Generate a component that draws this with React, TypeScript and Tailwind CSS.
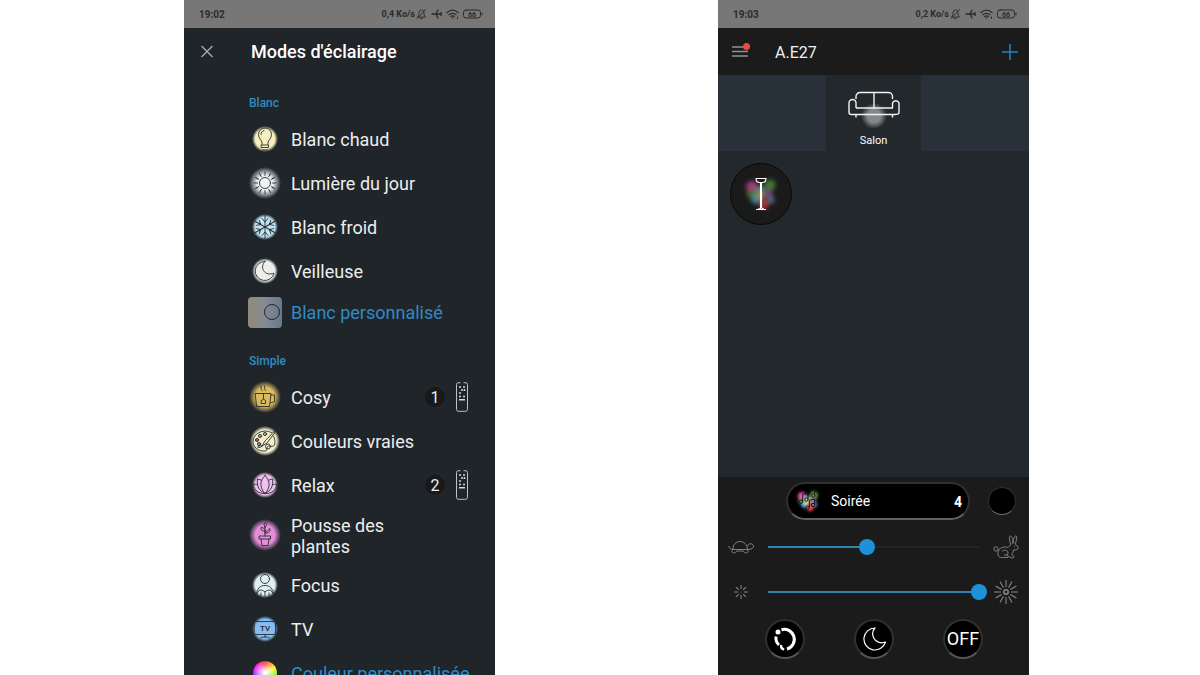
import { useState } from "react";
import type { ReactNode } from "react";

interface Mode {
  name: string;
  icon: ReactNode;
  shortcut?: number;
  custom?: boolean;
}

interface Section {
  title: string;
  modes: Mode[];
}

interface GlowIconProps {
  id: string;
  color: string;
  radius?: number;
  solid?: number;
  children: ReactNode;
}

// 34px drawing on a soft coloured disc
function GlowIcon({ id, color, radius = 13, solid = 0.75, children }: GlowIconProps) {
  return (
    <svg
      viewBox="0 0 34 34"
      className="w-[34px] h-[34px]"
      fill="none"
      stroke="#2b2f31"
      strokeWidth="0.9"
      strokeLinecap="round"
      strokeLinejoin="round"
      aria-hidden="true"
    >
      <defs>
        <radialGradient id={id}>
          <stop offset="0" stopColor={color} />
          <stop offset={solid} stopColor={color} />
          <stop offset="1" stopColor={color} stopOpacity="0" />
        </radialGradient>
      </defs>
      <circle cx="17" cy="17" r={radius} fill={`url(#${id})`} stroke="none" />
      {children}
    </svg>
  );
}

const sunRays = [0, 30, 60, 90, 120, 150, 180, 210, 240, 270, 300, 330];
const flakeArms = [0, 60, 120, 180, 240, 300];

const sections: Section[] = [
  {
    title: "Blanc",
    modes: [
      {
        name: "Blanc chaud",
        icon: (
          <GlowIcon id="warm" color="#f6eebd" radius={13}>
            <path d="M14 22.500v-2c0-2-3.500-4-3.500-8a6.500 6.500 0 0 1 13 0c0 4-3.500 6-3.500 8v2M13.500 23h7v2.500h-7zM13 12.500c0-2.200 1.200-3.500 3-4M14.500 28h5" />
          </GlowIcon>
        ),
      },
      {
        name: "Lumière du jour",
        icon: (
          <GlowIcon id="day" color="#e9eff2" radius={16} solid={0.5}>
            <circle cx="17" cy="17" r="5.500" fill="#eef5f7" />
            {sunRays.map((a) => (
              <path key={a} d="M17 9.500V6" transform={`rotate(${a} 17 17)`} />
            ))}
          </GlowIcon>
        ),
      },
      {
        name: "Blanc froid",
        icon: (
          <GlowIcon id="cold" color="#bfe4f3" radius={13}>
            {flakeArms.map((a) => (
              <path key={a} d="M17 17V5.500M14 8.500l3 3.500 3-3.500" transform={`rotate(${a} 17 17)`} />
            ))}
          </GlowIcon>
        ),
      },
      {
        name: "Veilleuse",
        icon: (
          <GlowIcon id="night" color="#eeeeeb" radius={13}>
            <path d="M17 7.500a9.500 9.500 0 1 0 9 11.500c-4 2-8.500 1-10.500-2.500-1.800-3-1-6.500 1.500-9z" />
          </GlowIcon>
        ),
      },
      {
        name: "Blanc personnalisé",
        custom: true,
        icon: (
          <span className="flex w-[34px] h-[31px] items-center justify-end rounded-sm bg-linear-to-r from-[#918a7b] via-[#868b92] to-[#68788c] pr-0.5">
            <span className="w-4 h-4 rounded-full border border-[#20272d]" />
          </span>
        ),
      },
    ],
  },
  {
    title: "Simple",
    modes: [
      {
        name: "Cosy",
        shortcut: 1,
        icon: (
          <GlowIcon id="cosy" color="#d8bb60" radius={16} solid={0.6}>
            <path d="M7.500 13.500h15.500l-1.500 13H9zM23 15h3.500v6.500l-4 1.500M15.500 13.500V19M14 10.500c-2-2 0-2.500-1-4.500M17.500 10.500c-2-2 0-2.500-1-4.500" />
            <path d="M13.500 20.500l2-1.500 2 1.500v3h-4z" />
          </GlowIcon>
        ),
      },
      {
        name: "Couleurs vraies",
        icon: (
          <GlowIcon id="palette" color="#f3efca" radius={15}>
            <path d="M23.500 8.500C15 4 5 10 5 17.500c0 6 6 10 12 9.500 3 0 1-3 2.500-4.500 2-1.500 5 1.500 7-1.500 1-3 .5-6-1-9" />
            <path d="M28 5.500L17 17l-3 5 5-3L28 7M14 22c-2-.5-3 0-4.500 1 2 1 4 .5 4.500-1z" />
            <circle cx="20" cy="22.500" r="2.500" />
            <circle cx="17" cy="10" r="1.600" fill="#8ec39a" />
            <circle cx="12" cy="12" r="1.600" fill="#d9a14e" />
            <circle cx="9" cy="16" r="1.600" fill="#cc5b4f" />
            <circle cx="11" cy="20" r="1.600" fill="#5c9dc5" />
          </GlowIcon>
        ),
      },
      {
        name: "Relax",
        shortcut: 2,
        icon: (
          <GlowIcon id="relax" color="#efc1ee" radius={13}>
            <path d="M17 7.500c-5.500 5.500-5.500 12 0 18 5.500-6 5.500-12.500 0-18zM13 12l-3.500-1c-1 7 1.500 12 7.500 14.500M21 12l3.500-1c1 7-1.500 12-7.500 14.500M9.500 16.500c-1.500 0-3-.5-4.500 0 1 5.500 6 9.500 12 9 6 .5 11-3.500 12-9-1.500-.5-3 0-4.500 0" />
          </GlowIcon>
        ),
      },
      {
        name: "Pousse des plantes",
        icon: (
          <GlowIcon id="plant" color="#e58fda" radius={16} solid={0.6}>
            <path d="M11.500 18h11v3h-11zM13 21l1 6.500h6l1-6.500M17 18V8M17 15l5-4.500c.5 3-1.500 5-5 4.500zM17 13c-3 .5-4.500-1-4-3.500 2.500 0 4 1 4 3.500zM17 9c-1.500-2-1-3.500.5-4.500 1.500 1.500 1.500 3-.5 4.500z" />
          </GlowIcon>
        ),
      },
      {
        name: "Focus",
        icon: (
          <GlowIcon id="focus" color="#e0f0f0" radius={13}>
            <circle cx="17" cy="11" r="4.500" />
            <path d="M8.500 26c.5-5.500 3.500-8.500 8.500-8.500s8 3 8.500 8.500M8.500 26l3-4c2 0 4 .5 5.500 2 1.500-1.500 3.500-2 5.500-2l3 4M17 24v4.500M13 25v3M21 25v3" />
          </GlowIcon>
        ),
      },
      {
        name: "TV",
        icon: (
          <GlowIcon id="tv" color="#85bdf0" radius={13}>
            <path d="M6.500 9.500h21v13h-21zM17 22.500V25M12.500 26c3-1.500 6-1.500 9 0" />
            <text x="17" y="19" textAnchor="middle" fontSize="8" fontWeight="500" fill="#25282a" stroke="none">
              TV
            </text>
          </GlowIcon>
        ),
      },
      {
        name: "Couleur personnalisée",
        custom: true,
        icon: (
          <span className="w-6 h-6 rounded-full bg-[radial-gradient(circle,#fff_5%,transparent_75%),conic-gradient(#f22,#fe0,#3e3,#0dd,#33f,#f0f,#f22)]" />
        ),
      },
    ],
  },
];

function StatusBar({ time, rate }: { time: string; rate: string }) {
  return (
    <div className="flex h-7 shrink-0 items-center bg-[#777777] pl-[15px] pr-3 text-[#2b2b2b]">
      <span className="flex-1 text-[10px] font-bold">{time}</span>
      <span className="pt-0.5 text-[9px] font-bold">{rate}</span>
      <svg
        viewBox="0 0 68 12"
        className="w-[68px] h-3"
        fill="none"
        stroke="currentColor"
        strokeLinecap="round"
        strokeLinejoin="round"
        aria-hidden="true"
      >
        <path d="M3 9h7.500L9 7V4.500a2.500 2.500 0 0 0-5 0V7L2.500 9M5.500 10.500h2M10.500 1.500l-8 9" strokeWidth="0.900" />
        <path d="M17 6h9.500M25 6l-3-.2-2 0M21 6l2-4M21 6l2 4M26 4.500v3" strokeWidth="1.300" />
        <path d="M32 4.500c3.500-3 7.500-3 11 0M34 6.700c2.500-2 4.500-2 7 0M35.700 8.600c1.300-1 2.300-1 3.600 0" strokeWidth="1.200" />
        <circle cx="37.500" cy="10" r="0.800" fill="currentColor" stroke="none" />
        <path d="M42.500 9v1.500" />
        <rect x="48.500" y="2" width="17" height="8" rx="2.500" />
        <path d="M67 5v2" />
        <text x="57" y="8.500" textAnchor="middle" fontSize="7" fontWeight="700" fill="currentColor" stroke="none">
          66
        </text>
      </svg>
    </div>
  );
}

function RemoteIcon() {
  return (
    <svg viewBox="0 0 12 30" className="w-3 h-[30px]" fill="none" stroke="#bfc2c4" aria-hidden="true">
      <path d="M4.500.7H2.500a2 2 0 0 0-2 2v24.600a2 2 0 0 0 2 2h7a2 2 0 0 0 2-2V2.700a2 2 0 0 0-2-2H7.500" />
      <g fill="#d5d7d8" stroke="none">
        <circle cx="4" cy="5" r="1" />
        <circle cx="8" cy="5" r="1" />
        <circle cx="6" cy="8" r="1" />
        <circle cx="8.500" cy="8" r="1" />
        <circle cx="4" cy="11" r="1" />
        <circle cx="4" cy="14.500" r="1" />
        <circle cx="8" cy="14.500" r="1" />
        <rect x="3" y="17" width="6" height="1.500" />
      </g>
    </svg>
  );
}

function ModeRow({ mode }: { mode: Mode }) {
  return (
    <button
      type="button"
      className="flex w-full min-h-11 items-center pl-16 pr-6 text-left text-lg leading-[21px] text-[#eceeef]"
    >
      <span className="flex w-[34px] shrink-0 justify-center">{mode.icon}</span>
      {mode.custom ? (
        <span className="ml-[9px] pt-px whitespace-nowrap text-[#318bc3]">{mode.name}</span>
      ) : (
        <>
          <span className="ml-[9px] flex-1 pt-px">{mode.name}</span>
          <span className="flex w-[46px] shrink-0 items-center gap-[11px]">
            {mode.shortcut && (
              <>
                <span className="flex w-5 h-5 items-center justify-center rounded-full bg-[#18191a] pt-px text-base">
                  {mode.shortcut}
                </span>
                <RemoteIcon />
              </>
            )}
          </span>
        </>
      )}
    </button>
  );
}

function ModesScreen() {
  return (
    <section className="col-start-2 flex h-screen flex-col overflow-hidden bg-[#20252a]">
      <StatusBar time="19:02" rate="0,4 Ko/s" />
      <header className="flex h-12 shrink-0 items-center pl-4">
        <button type="button" aria-label="Fermer" className="text-[#a5a8aa]">
          <svg viewBox="0 0 14 14" className="w-3.5 h-3.5" stroke="currentColor" strokeWidth="1.400">
            <path d="M1.500 1l11 11M12.500 1l-11 11" />
          </svg>
        </button>
        <h1 className="ml-[37px] text-lg font-medium text-white">Modes d'éclairage</h1>
      </header>
      {sections.map((section) => (
        <div key={section.title} className="pt-[15px]">
          <h2 className="flex h-6 items-center pl-[65px] text-xs font-medium text-[#318bc3]">
            {section.title}
          </h2>
          <ul className="pt-0.5">
            {section.modes.map((mode) => (
              <li
                key={mode.name}
                className={
                  mode.name === "Blanc personnalisé"
                    ? "-mt-[3px]"
                    : mode.name === "Pousse des plantes"
                      ? "py-1.5"
                      : ""
                }
              >
                <ModeRow mode={mode} />
              </li>
            ))}
          </ul>
        </div>
      ))}
    </section>
  );
}

interface SliderProps {
  label: string;
  initial: number;
  low: ReactNode;
  high: ReactNode;
}

function Slider({ label, initial, low, high }: SliderProps) {
  const [value, setValue] = useState(initial);

  return (
    <label className="flex h-[45px] items-center gap-1.5 px-2.5 pb-0.5 text-[#8b8b8b]">
      <span className="flex w-[26px] shrink-0 justify-center">{low}</span>
      <input
        type="range"
        aria-label={label}
        value={value}
        onChange={(e) => setValue(Number(e.target.value))}
        style={{
          backgroundImage: `linear-gradient(to right, #2f83b0 ${value}%, #242424 ${value}%)`,
        }}
        className="h-4 min-w-0 flex-1 appearance-none bg-transparent bg-[length:calc(100%-16px)_2px] bg-center bg-no-repeat [&::-webkit-slider-thumb]:h-4 [&::-webkit-slider-thumb]:w-4 [&::-webkit-slider-thumb]:appearance-none [&::-webkit-slider-thumb]:rounded-full [&::-webkit-slider-thumb]:bg-[#1f91d8]"
      />
      <span className="flex w-[26px] shrink-0 justify-center">{high}</span>
    </label>
  );
}

function Turtle() {
  return (
    <svg viewBox="0 0 26 14" className="w-[26px] h-3.5" fill="none" stroke="currentColor" strokeWidth="0.900" aria-hidden="true">
      <path d="M.5 6c1 2.500 2.500 3.500 5 3.500h14.500c3.500 0 5.500-1 5.500-3.500s-5-3.500-6 0M5 9C5 4.500 8 1.500 12 1.500S19 4.500 19.500 9M5 9.500c-1.500 1.500-1.500 3.500.5 3.500S8.500 12 8.500 11h7c0 1 1 2 3 2s2-2 .5-3.500" />
    </svg>
  );
}

function Rabbit() {
  return (
    <svg viewBox="0 0 26 24" className="w-[26px] h-6" fill="none" stroke="currentColor" strokeWidth="0.900" strokeLinejoin="round" aria-hidden="true">
      <path d="M18 9.500C15.800 5 16 1 17.500 1S20 5 20 8.500C20 4 22 0 23.200 1S23.500 6 22 9c2 1 3.500 3 3 4.500s-2.500 1.500-4.500 1.500c0 2-1 3.500-2 4.500l2 1.500c1 1.500-.5 2-1.500 2L15.500 21.500M18 9.500c-1.500.8-2 2-3 3-4-1.500-9 0-10 5M5 17.500c-.5 3 1 5 3.500 5H15c1-2-1-3-4-2.500M9 16.500c2-2.500 6-1.500 6 1.500 0 1.500-1 2-2 2.500" />
      <circle cx="3" cy="14" r="2.200" />
      <circle cx="21.500" cy="11.500" r="0.500" fill="currentColor" stroke="none" />
    </svg>
  );
}

const roundButton =
  "flex w-10 h-10 items-center justify-center rounded-full border-2 border-[#303030] border-b-[#555555] bg-black text-white";

// Blurred spots behind the party icons
function ColorSpots() {
  return (
    <g stroke="none">
      <circle cx="9" cy="11" r="6" fill="#c8439a" />
      <circle cx="27" cy="9" r="5.500" fill="#4f8f38" />
      <circle cx="17" cy="16" r="6" fill="#6fa083" />
      <circle cx="8" cy="18" r="4" fill="#5b8a35" />
      <circle cx="25" cy="18" r="5" fill="#80558f" />
      <circle cx="13" cy="23" r="5" fill="#4f9acb" />
      <circle cx="17" cy="20" r="3.500" fill="#c9b23d" />
      <circle cx="21" cy="28" r="5" fill="#c93c3c" />
      <circle cx="28" cy="24" r="3.500" fill="#5a7e9c" />
    </g>
  );
}

function RoomScreen() {
  return (
    <section className="col-start-4 flex h-screen flex-col overflow-hidden bg-[#22282b]">
      <StatusBar time="19:03" rate="0,2 Ko/s" />
      <header className="flex h-[47px] shrink-0 items-center bg-[#1b1b1b] pl-3.5 pr-[11px]">
        <button type="button" aria-label="Menu" className="relative">
          <svg viewBox="0 0 16 12" className="w-4 h-3" stroke="#93938c" strokeWidth="1.500">
            <path d="M0 1h16M0 5.500h16M0 10h16" />
          </svg>
          <span className="absolute -right-0.5 -top-[3px] w-[7px] h-[7px] rounded-full bg-[#f0473f]" />
        </button>
        <h1 className="ml-[27px] flex-1 pt-0.5 text-base text-[#f0f0f0]">A.E27</h1>
        <button type="button" aria-label="Ajouter" className="text-[#2187c0]">
          <svg viewBox="0 0 16 16" className="w-4 h-4" stroke="currentColor" strokeWidth="1.500">
            <path d="M8 0v16M0 8h16" />
          </svg>
        </button>
      </header>

      <nav className="grid h-[76px] shrink-0 grid-cols-[108fr_95fr_108fr] bg-[#28313a]">
        <button
          type="button"
          className="col-start-2 flex flex-col items-center bg-[#22282b] pt-4 text-[11px] leading-4 text-white"
        >
          <svg viewBox="0 0 52 38" className="w-[52px] h-[38px]" fill="none" stroke="#f2f2f2" strokeWidth="1.400" aria-hidden="true">
            <defs>
              <radialGradient id="lamp">
                <stop offset="0.500" stopColor="#85888a" />
                <stop offset="1" stopColor="#85888a" stopOpacity="0" />
              </radialGradient>
            </defs>
            <circle cx="26" cy="25" r="13" fill="url(#lamp)" stroke="none" />
            <path d="M8 8V5.500a4 4 0 0 1 4-4h28.500a4 4 0 0 1 4 4V8M26 1.500v15M8 17h37M8 17V12a3.500 3.500 0 0 0-7 0v9.500c0 1.500 1 2 2.500 2h43c3 0 4.500-.5 4.500-2V12a3.500 3.500 0 0 0-6.500 0v5M8 23.500v3M44.500 23.500v3" />
          </svg>
          <span className="pt-1">Salon</span>
        </button>
      </nav>

      <main className="flex-1 p-3">
        <button
          type="button"
          aria-label="Lampadaire"
          className="flex w-[62px] h-[62px] items-center justify-center rounded-full border border-[#080808] bg-[#1a1a1a]"
        >
          <svg viewBox="0 0 36 36" className="w-9 h-9" fill="none" stroke="#fff" strokeWidth="1.100" aria-hidden="true">
            <g className="opacity-80 blur-[2px]">
              <ColorSpots />
            </g>
            <path d="M13 2.500h10c0 2.500-1.500 4-3.500 4h-3c-2 0-3.500-1.500-3.500-4zM17.500 6.500v25.500M18.500 6.500v25.500M13 33.500h10M15 33c2 0 3-.5 3-1.500s1 1.500 3 1.500" />
          </svg>
        </button>
      </main>

      <footer className="shrink-0 bg-[#1b1b1b] pb-4">
        <div className="flex h-12 items-center pl-[68px] pr-[13px]">
          <button
            type="button"
            className="flex h-[38px] flex-1 items-center rounded-full border-2 border-[#303030] border-b-[#606060] bg-black pl-2 pr-1.5 text-sm text-white"
          >
            <svg viewBox="0 0 36 36" className="w-6 h-6 overflow-visible" fill="none" stroke="#161616" strokeWidth="1.500" aria-hidden="true">
              <g className="blur-[2px] brightness-125">
                <ColorSpots />
              </g>
              <path d="M10 19V8l8-2v10M28 10V3l4 2M20 28V17l8-2v9" />
              <circle cx="7.500" cy="19" r="2.500" />
              <circle cx="15.500" cy="16" r="2.500" />
              <circle cx="26" cy="10" r="2.500" />
              <circle cx="17.500" cy="28" r="2.500" />
              <circle cx="25.500" cy="24" r="2.500" />
            </svg>
            <span className="ml-[11px] flex-1 text-left">Soirée</span>
            <span className="pt-0.5 font-bold">4</span>
          </button>
          <button
            type="button"
            aria-label="Couleur"
            className="ml-[18px] w-7 h-7 rounded-full border border-[#303030] border-b-[#707070] bg-black"
          />
        </div>

        <Slider label="Vitesse" initial={47} low={<Turtle />} high={<Rabbit />} />
        <Slider
          label="Luminosité"
          initial={100}
          low={
            <svg viewBox="0 0 14 14" className="w-3.5 h-3.5" fill="none" stroke="currentColor" aria-hidden="true">
              {[0, 45, 90, 135, 180, 225, 270, 315].map((a) => (
                <path key={a} d="M7 4V0" transform={`rotate(${a} 7 7)`} />
              ))}
              <circle cx="7" cy="7" r="0.600" fill="currentColor" stroke="none" />
            </svg>
          }
          high={
            <svg viewBox="0 0 24 24" className="w-6 h-6" fill="none" stroke="currentColor" aria-hidden="true">
              {sunRays.map((a) => (
                <path key={a} d="M12 7V0" transform={`rotate(${a} 12 12)`} />
              ))}
              <circle cx="12" cy="12" r="2.200" strokeWidth="1.500" />
            </svg>
          }
        />

        <div className="flex justify-between pl-[47px] pr-[46px] pt-1">
          <button type="button" aria-label="Scène dynamique" className={roundButton}>
            <svg viewBox="0 0 26 26" className="w-[26px] h-[26px]" fill="none" stroke="#fff" strokeWidth="3" aria-hidden="true">
              <path d="M9.500 3.700A10 10 0 1 1 15 23" />
              <path d="M4 10.500a10 10 0 0 0 3 8.500" />
              <circle cx="6" cy="6" r="2.500" fill="#fff" stroke="none" />
              <path d="M9.200 19c-.5 2.500.5 4 3 4.300" strokeWidth="2.400" />
            </svg>
          </button>
          <button type="button" aria-label="Veilleuse" className={roundButton}>
            <svg viewBox="0 0 24 24" className="w-6 h-6" fill="none" stroke="#fff" strokeWidth="1.200" strokeLinejoin="round" aria-hidden="true">
              <path d="M13 1A11 11 0 1 0 23.500 15c-4.500 1.800-9.500.3-11.500-3.500S10.500 3.500 13 1z" />
            </svg>
          </button>
          <button type="button" className={`${roundButton} text-lg`}>
            OFF
          </button>
        </div>
      </footer>
    </section>
  );
}

export default function App() {
  return (
    <div className="grid h-screen grid-cols-[184fr_311fr_223fr_311fr_171fr] overflow-hidden bg-white font-[Roboto,sans-serif]">
      <ModesScreen />
      <RoomScreen />
    </div>
  );
}
